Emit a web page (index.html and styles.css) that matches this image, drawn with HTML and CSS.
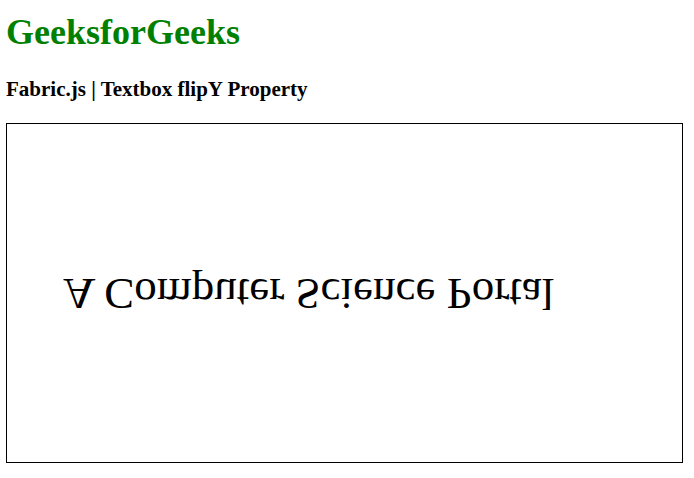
FILE: index.html
```html
<!DOCTYPE html>
<html>
<head>
<meta charset="utf-8">
<link rel="stylesheet" href="styles.css">
</head>
<body>
<h1 class="title">GeeksforGeeks</h1>
<h3 class="subtitle">Fabric.js | Textbox flipY Property</h3>
<div class="canvas">
  <div class="textbox">A Computer Science Portal</div>
</div>
</body>
</html>
```
FILE: styles.css
```css
html, body {
  margin: 0;
  padding: 0;
  background: #fff;
}
body {
  padding: 0 6px;
  font-family: "Liberation Serif", "Times New Roman", serif;
}
.title {
  margin: 12px 0 0;
  font-size: 36px;
  line-height: 40px;
  font-weight: bold;
  color: #008000;
}
.subtitle {
  margin: 26px 0 22px;
  font-size: 21px;
  line-height: 23px;
  font-weight: bold;
  color: #000;
}
.canvas {
  position: relative;
  width: 675px;
  height: 338px;
  border: 1px solid #000;
}
.textbox {
  position: absolute;
  left: 56px;
  top: 147px;
  font-size: 45px;
  line-height: 45px;
  color: #000;
  white-space: nowrap;
  transform: scaleY(-1);
}
```
